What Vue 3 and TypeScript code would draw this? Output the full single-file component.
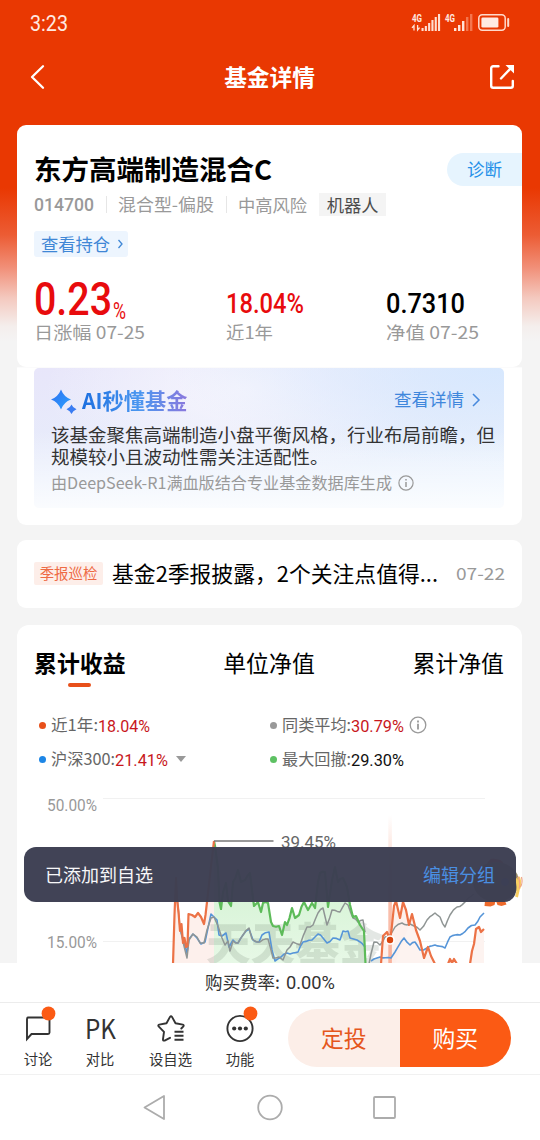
<script setup lang="ts">
import { h } from 'vue'

interface FitProps {
  t: string
  w: number
  s: number
}

// One line of text set to an exact advance width; the box is one em high.
const Fit = (p: FitProps) =>
  h('svg', { class: 'fit', width: p.w, height: p.s }, [
    h(
      'text',
      { x: 0, y: p.s * 0.87, 'font-size': p.s, textLength: p.w, lengthAdjust: 'spacingAndGlyphs', fill: 'currentColor' },
      p.t,
    ),
  ])
Fit.props = ['t', 'w', 's']

type Pt = [number, number]

// Adds small alternating steps between the key points of a price line.
function jag(points: Pt[], amp: number): string {
  const out: string[] = []
  points.forEach(([x, y], i) => {
    if (i > 0) {
      const [px, py] = points[i - 1]
      const n = Math.floor((x - px) / 2.4)
      for (let k = 1; k < n; k++) {
        const f = k / n
        const d = Math.sin((px + k * 2.4) * 12.9) * amp
        out.push(`${(px + (x - px) * f).toFixed(1)},${(py + (y - py) * f + d).toFixed(1)}`)
      }
    }
    out.push(`${x},${y}`)
  })
  return out.join(' ')
}

const fundA: Pt[] = [[173, 964], [174.5, 915], [176, 878], [177, 899], [178.5, 912], [180, 931], [181.5, 924], [183, 943], [184.5, 938], [186, 947], [187.5, 946], [188.5, 914], [192, 915], [195, 917], [198, 913], [201, 917], [204, 924], [205.5, 915], [207, 902], [209, 884], [211, 866], [214, 841]]
const fundB: Pt[] = [[381, 964], [383, 936], [387, 932], [390, 940], [391.5, 930], [394, 906], [396, 901], [400, 918], [403, 902], [406, 910], [409, 925], [412, 914], [416, 930], [420, 941], [424, 958], [428, 947], [431, 956], [435, 964]]
const fundC: Pt[] = [[470, 964], [472, 951], [474, 944], [476, 929], [479, 927], [481, 932], [484, 929]]
const fall: Pt[] = [[214, 841], [215, 846], [218, 868], [219.5, 902], [221, 909], [223, 892], [226, 883], [228, 901], [231, 906], [233, 882], [238, 870], [241, 882], [245, 880], [250, 873], [252, 890], [254, 906], [258, 902], [261, 912], [263, 903], [268, 903], [271, 922], [273, 926], [279, 926], [282, 935], [285, 922], [287, 925], [292, 908], [295, 918], [299, 915], [304, 902], [308, 910], [312, 903], [315, 908], [318, 882], [320, 873], [325, 872], [328, 907], [332, 880], [335, 867], [338, 882], [343, 878], [347, 887], [350, 905], [353, 917], [356, 916], [360, 925], [364, 931], [365.5, 964]]
const peersA: Pt[] = [[176, 880], [177, 895], [180, 928], [184, 946], [187, 958], [189, 940], [193, 934], [197, 937], [200, 943], [204, 943], [207, 930], [211, 918], [214, 917], [218, 926], [222, 938], [225, 945], [228, 941], [230, 951], [233, 941], [238, 943], [243, 935], [249, 928], [252, 939], [260, 942], [268, 939], [271, 950], [273, 958], [279, 957], [283, 960], [287, 950], [293, 942], [300, 945], [307, 927], [313, 925], [318, 913], [323, 908], [327, 925], [332, 910], [340, 912], [345, 903], [348, 905], [353, 918], [358, 922], [363, 920], [365, 932]]
const peersB: Pt[] = [[369, 964], [371, 954], [374, 942], [380, 945], [385, 937], [391, 934], [395, 927], [402, 923], [410, 924], [414, 926], [420, 930], [427, 920], [435, 913], [440, 917], [445, 927], [450, 915], [457, 907], [465, 902], [474, 894]]
const indexA: Pt[] = [[181, 932], [184, 942], [187, 953], [189, 939], [193, 934], [197, 938], [201, 944], [205, 942], [208, 928], [211, 914], [214, 917], [217, 920], [219, 935], [222, 936], [226, 933], [229, 947], [233, 940], [238, 943], [243, 935], [249, 929], [253, 940], [259, 942], [262, 935], [269, 932], [272, 950], [275, 961], [281, 957], [287, 953], [293, 953], [298, 952], [303, 942], [312, 940], [318, 934], [323, 938], [327, 943], [333, 938], [340, 940], [343, 931], [348, 931], [350, 938], [357, 940], [365, 947]]
const indexB: Pt[] = [[371, 961], [380, 957], [391, 958], [395, 952], [404, 938], [410, 945], [415, 942], [420, 950], [427, 948], [435, 945], [445, 948], [450, 937], [460, 935], [468, 928], [475, 925], [480, 917], [484, 913]]

const bars1 = [3, 5, 8, 11, 14, 17]
const bars2 = [3, 6, 10, 14, 17]
</script>

<template>
  <div class="page">
    <header class="status">
      <Fit class="clock" t="3:23" :w="38" :s="21.5" />
      <svg class="signals" width="100" height="22" viewBox="410 11 100 22">
        <g class="net">
          <text x="412" y="22" textLength="10" lengthAdjust="spacingAndGlyphs">4G</text>
          <text x="445" y="22" textLength="10" lengthAdjust="spacingAndGlyphs">4G</text>
        </g>
        <path d="M414 30.500v-5l-2 2.400M417.600 25v5l2-2.400" fill="none" stroke="#ffe3d8" stroke-width="1.3" />
        <rect v-for="(b, i) in bars1" :key="'a' + i" :x="421.5 + i * 3.3" :y="31 - b" width="2.1" :height="b" fill="#ffdfd2" />
        <rect v-for="(b, i) in bars2" :key="'b' + i" :x="454 + i * 4" :y="31 - b" width="2.4" :height="b" :fill="i > 2 ? '#f4764e' : '#ffe3d8'" />
        <rect x="478.8" y="14.8" width="26.4" height="15.4" rx="3.4" fill="none" stroke="#ffdacb" stroke-width="1.5" />
        <rect x="481.4" y="17.4" width="17" height="10.2" rx="1.4" fill="#ffeae2" />
        <rect x="507.2" y="18" width="2" height="9" rx="1" fill="#ffdacb" />
      </svg>
    </header>
    <nav class="top">
      <svg width="18" height="26" viewBox="0 0 18 26"><path d="M15 2.200L4 13l11 10.800" fill="none" stroke="#fff" stroke-width="2.3" stroke-linecap="round" stroke-linejoin="round" /></svg>
      <h1>基金详情</h1>
      <svg width="26" height="26" viewBox="0 0 26 26"><g fill="none" stroke="#fff" stroke-width="2.4"><path d="M9.5 2.2H4.2a2 2 0 0 0-2 2v17.600a2 2 0 0 0 2 2h17.600a2 2 0 0 0 2-2V17" stroke-linecap="round" /><path d="M12 14.500L22.500 3.500" stroke-linecap="round" /></g><path d="M16.500 1h8.500v8.500z" fill="#fff" /></svg>
    </nav>

    <section class="card fund">
      <div class="title">
        <Fit class="b" t="东方高端制造混合C" :w="238" :s="27.2" />
        <span class="diag">诊断</span>
      </div>
      <div class="meta">
        <Fit class="num m" t="014700" :w="60" :s="18.500" />
        <i></i>
        <Fit t="混合型-偏股" :w="96" :s="17.300" />
        <i></i>
        <span>中高风险</span>
        <span class="tag">机器人</span>
      </div>
      <div class="hold">
        <span>查看持仓</span>
        <svg width="8" height="12" viewBox="0 0 8 12"><path d="M2.500 2L6 6 2.500 10" fill="none" stroke="#3f87d6" stroke-width="1.3" /></svg>
      </div>
      <div class="stats">
        <div>
          <p class="up big"><Fit class="num sb" t="0.23" :w="78" :s="46" /><Fit class="num pct" t="%" :w="13" :s="24" /></p>
          <p class="lab"><Fit t="日涨幅 07-25" :w="111" :s="17.5" /></p>
        </div>
        <div>
          <p class="up"><Fit class="num sb" t="18.04%" :w="78" :s="28.5" /></p>
          <p class="lab"><Fit t="近1年" :w="47" :s="17.5" /></p>
        </div>
        <div>
          <p><Fit class="num sb" t="0.7310" :w="79" :s="28.5" /></p>
          <p class="lab"><Fit t="净值 07-25" :w="93" :s="17.5" /></p>
        </div>
      </div>
    </section>

    <section class="ai-wrap">
      <div class="ai">
        <div class="ai-head">
          <svg width="26" height="26" viewBox="0 0 26 26"><defs><linearGradient id="sp" x1="0" y1="0" x2="1" y2="1"><stop offset="0" stop-color="#2f6ff0" /><stop offset="1" stop-color="#2aa2ff" /></linearGradient></defs><path d="M10 0.500Q12.800 7.900 20 10.500Q12.800 13.100 10 20.500Q7.200 13.100 0 10.500Q7.200 7.900 10 0.500Z" fill="url(#sp)" /><path d="M20.500 15.500Q21.800 18.900 25.500 20.200Q21.800 21.600 20.500 25Q19.200 21.600 15.500 20.200Q19.200 18.900 20.500 15.500Z" fill="#3a7cf2" /></svg>
          <h2>AI秒懂基金</h2>
          <span>查看详情</span>
          <svg width="12" height="16" viewBox="0 0 12 16"><path d="M3 2l6 6-6 6" fill="none" stroke="#4689dd" stroke-width="1.500" /></svg>
        </div>
        <p class="ai-text">
          <Fit t="该基金聚焦高端制造小盘平衡风格，行业布局前瞻，但" :w="444" :s="18.5" />
          <Fit t="规模较小且波动性需关注适配性。" :w="277.500" :s="18.5" />
        </p>
        <p class="ai-src">
          <Fit t="由DeepSeek-R1满血版结合专业基金数据库生成" :w="341" :s="16" />
          <svg width="16" height="16" viewBox="0 0 16 16"><circle cx="8" cy="8" r="7.100" fill="none" stroke="#999" stroke-width="1.200" /><path d="M8 4v1.600M8 7v5" stroke="#999" stroke-width="1.500" /></svg>
        </p>
      </div>
    </section>

    <section class="card news">
      <span class="badge">季报巡检</span>
      <Fit class="head" t="基金2季报披露，2个关注点值得..." :w="326" :s="21.500" />
      <Fit class="date" t="07-22" :w="49" :s="17" />
    </section>

    <section class="card perf">
      <div class="tabs">
        <span class="on">累计收益</span>
        <span>单位净值</span>
        <span>累计净值</span>
      </div>
      <div class="legend">
        <div class="item"><b class="dot d1"></b><Fit t="近1年:" :w="47" :s="16" /><Fit class="num red" t="18.04%" :w="52" :s="16.800" /></div>
        <div class="item"><b class="dot d2"></b><Fit t="同类平均:" :w="69" :s="16" /><Fit class="num red" t="30.79%" :w="53" :s="16.800" />
          <svg class="info" width="18" height="18" viewBox="0 0 18 18"><circle cx="9" cy="9" r="7.800" fill="none" stroke="#999" stroke-width="1.300" /><path d="M9 4.600v1.800M9 7.800v5.600" stroke="#999" stroke-width="1.800" /></svg>
        </div>
        <div class="item"><b class="dot d3"></b><Fit t="沪深300:" :w="64" :s="16" /><Fit class="num red" t="21.41%" :w="53" :s="16.800" /><b class="caret"></b></div>
        <div class="item"><b class="dot d4"></b><Fit t="最大回撤:" :w="69" :s="16" /><Fit class="num blk" t="29.30%" :w="53" :s="16.800" /></div>
      </div>
      <svg class="chart" width="505" height="173" viewBox="17 790 505 173">
        <defs>
          <linearGradient id="gf" x1="0" y1="0" x2="0" y2="1"><stop offset="0" stop-color="#c3eec3" /><stop offset="1" stop-color="#e3f7e2" /></linearGradient>
          <linearGradient id="beam" x1="0" y1="0" x2="0" y2="1"><stop offset="0" stop-color="#f58a68" stop-opacity="0" /><stop offset="0.600" stop-color="#f58a68" stop-opacity="0.550" /><stop offset="1" stop-color="#f58a68" stop-opacity="0.600" /></linearGradient>
        </defs>
        <path d="M103 798.500H485M103 941.500H485" stroke="#f1f1f1" stroke-width="1" />
        <g class="axis">
          <text x="47" y="810.500" textLength="50" lengthAdjust="spacingAndGlyphs">50.00%</text>
          <text x="47" y="947.500" textLength="50" lengthAdjust="spacingAndGlyphs">15.00%</text>
        </g>
        <polygon :points="jag(fundA, 0) + ' 214,964'" fill="#fdf0ec" />
        <polygon :points="jag(fundB, 0)" fill="#fdf0ec" />
        <polygon points="409,925 420,941 424,958 428,947 435,964 470,964 472,951 476,929 484,929 484,964 395,964" fill="#fdf3f0" />
        <polygon :points="'214,964 ' + jag(fall, 0)" fill="url(#gf)" opacity="0.850" />
        <text class="mark" x="206" y="961" textLength="178" lengthAdjust="spacingAndGlyphs">天天基金</text>
        <rect x="388.300" y="815" width="3.600" height="150" fill="url(#beam)" />
        <g fill="none" stroke-linejoin="round">
          <g stroke="#5695d8" stroke-width="1.600"><polyline :points="jag(indexA, 1)" /><polyline :points="jag(indexB, 1)" /></g>
          <g stroke="#8f9594" stroke-width="1.500"><polyline :points="jag(peersA, 1.100)" /><polyline :points="jag(peersB, 1.300)" /></g>
          <polyline :points="jag(fall, 1.800)" stroke="#5dbb59" stroke-width="2.200" />
          <g stroke="#ec7246" stroke-width="2.200"><polyline :points="jag(fundA, 1)" /><polyline :points="jag(fundB, 1.200)" /><polyline :points="jag(fundC, 1)" /><polyline points="448,964 450,959 452,963 454,959 457,964" /></g>
        </g>
        <path d="M214 841H273.500" stroke="#777" stroke-width="1.500" />
        <text class="peak" x="281" y="848" textLength="55" lengthAdjust="spacingAndGlyphs">39.45%</text>
        <circle cx="390" cy="940" r="4.800" fill="#fff" /><circle cx="390" cy="940" r="3.200" fill="#d9460f" />
      </svg>
    </section>

    <svg class="mascot" width="60" height="60" viewBox="468 850 60 60">
      <path d="M486 868q2-12 10-9 9 0 8 10z" fill="#e8492c" />
      <ellipse cx="496" cy="882" rx="23" ry="20" fill="#8f8466" />
      <circle cx="483" cy="882" r="4" fill="#3b66b8" /><circle cx="505" cy="882" r="4" fill="#3b66b8" />
      <path d="M485 901h10.500l-1 4-4 1.500-6-0.500zM496 901h9l1.500 3.500-5 1.500-4-1z" fill="#ee6a2b" />
      <path d="M515.500 879q5 6 1 18M518.500 877q3 8-1 14" stroke="#f9cf62" stroke-width="3" fill="none" />
      <path d="M518 876.500q3 7 1 12M521.500 877q1.500 6-1 10" stroke="#f0a184" stroke-width="1.100" fill="none" />
    </svg>

    <div class="toast"><span>已添加到自选</span><a>编辑分组</a></div>

    <footer class="bottom">
      <div class="fee"><Fit t="购买费率:" :w="75" :s="17.500" /><Fit class="num" t="0.00%" :w="49" :s="18.500" /></div>
      <div class="actions">
        <div class="tools">
          <div class="tool">
            <svg width="36" height="40" viewBox="20 1004 36 40"><path d="M27.500 1017.500h20.500a1.500 1.500 0 0 1 1.500 1.500v13.500a1.500 1.500 0 0 1-1.500 1.500H31.500l-4.500 5v-20a1.500 1.500 0 0 1 1.500-1.500z" fill="none" stroke="#333" stroke-width="1.900" /><circle cx="48.500" cy="1013.500" r="6.900" fill="#fb5a14" /></svg>
            <span>讨论</span>
          </div>
          <div class="tool">
            <Fit class="pk" t="PK" :w="31" :s="26.500" />
            <span>对比</span>
          </div>
          <div class="tool">
            <svg width="36" height="40" viewBox="152 1004 36 40"><g fill="none" stroke="#333" stroke-width="1.900" stroke-linejoin="round" stroke-linecap="round"><path d="M169 1037.800L163.600 1040.600Q161.800 1041 162 1039.200L163 1031.800L157.600 1026.300Q156.800 1025 158.200 1024.600L165.500 1023.300L169 1016.900Q170 1015.300 171 1016.900L174.500 1023.300L181.800 1024.600Q183.200 1025 182.400 1026.300L180.300 1028.500" /><path d="M173.500 1031.800h9M173.500 1035.800h9M173.500 1039.800h9" stroke-linecap="butt" stroke-width="2" /></g></svg>
            <span>设自选</span>
          </div>
          <div class="tool">
            <svg width="36" height="40" viewBox="222 1004 36 40"><circle cx="240" cy="1028.500" r="12.600" fill="none" stroke="#333" stroke-width="1.900" /><g fill="#333"><circle cx="234.200" cy="1028.500" r="2.100" /><circle cx="240" cy="1028.500" r="2.100" /><circle cx="245.800" cy="1028.500" r="2.100" /></g><circle cx="250.500" cy="1013.500" r="6.900" fill="#fb5a14" /></svg>
            <span>功能</span>
          </div>
        </div>
        <div class="btns"><span class="plan">定投</span><span class="buy">购买</span></div>
      </div>
      <div class="sys">
        <svg width="260" height="30" viewBox="140 1092 260 30"><g fill="none" stroke="#acacac" stroke-width="1.800" stroke-linejoin="round"><path d="M164 1096v23L144.500 1107.500z" /><circle cx="270" cy="1107.500" r="11.800" /><rect x="374" y="1097" width="21" height="21" rx="1" /></g></svg>
      </div>
    </footer>
  </div>
</template>

<style>
body {
  margin: 0;
  background: #fff;
}
</style>

<style scoped>
.page {
  position: relative;
  width: 540px;
  height: 1140px;
  overflow: hidden;
  box-sizing: border-box;
  display: flex;
  flex-direction: column;
  background: linear-gradient(#e93802 0, #e93802 188px, #ec5c34 235px, #f19079 268px, #f4c9bf 298px, #f4eeec 326px, #f4f4f4 342px);
  font-family: "Noto Sans CJK SC", "Noto Sans", sans-serif;
  color: #000;
}
p, h1, h2 { margin: 0; }
svg { display: block; flex: none; }
.fit { overflow: visible; }
.num { font-family: Roboto, "Noto Sans CJK SC", sans-serif; }
.b { font-weight: 700; }
.m { font-weight: 500; }
.sb { font-weight: 500; }
.status {
  height: 47px;
  flex: none;
  display: flex;
  justify-content: space-between;
  align-items: center;
  padding: 0 30px;
  color: #ffe9e1;
}
.clock { font-family: Roboto, sans-serif; margin-bottom: 1px; }
.signals { margin-bottom: 3px; overflow: visible; }
.net { fill: #ffe9e1; font: 700 10px Roboto, sans-serif; }
.top {
  height: 60px;
  flex: none;
  display: flex;
  align-items: center;
  justify-content: space-between;
  padding: 0 25px 0 28px;
}
.top h1 { font-size: 22.700px; line-height: 30px; font-weight: 700; color: #fff; margin-left: 4px; }
.card { background: #fff; border-radius: 9px; margin: 0 18px 0 17px; flex: none; box-sizing: border-box; }
.fund { margin-top: 17.500px; height: 242.500px; padding-top: 28px; }
.title { height: 34px; display: flex; align-items: center; justify-content: space-between; padding-left: 17px; }
.diag { width: 75px; height: 33px; line-height: 32px; border-radius: 17px 0 0 17px; background: #e6f4fe; color: #2590e8; font-size: 17.500px; text-align: center; }
.meta { margin-top: 6px; height: 24px; display: flex; align-items: center; padding-left: 17px; color: #999; font-size: 17.300px; line-height: 23px; }
.meta i { width: 1px; height: 17px; background: #e6e6e6; margin: 0 11.500px; }
.meta .tag { background: #f4f4f4; color: #4c4c4c; padding: 0 7.500px; margin-left: 12px; }
.hold { margin: 14px 0 0 17px; width: 94px; height: 26px; box-sizing: border-box; padding: 0 4px 0 7px; border-radius: 3px; background: #edf5fe; color: #3f87d6; font-size: 17.300px; line-height: 25px; display: flex; align-items: center; justify-content: space-between; }
.stats { display: grid; grid-template-columns: 192px 160px 1fr; padding-left: 17px; margin-top: 18px; }
.stats p { display: flex; align-items: flex-end; height: 46px; box-sizing: border-box; }
.stats > div > p:first-child { padding-bottom: 4px; }
.stats .big { padding-bottom: 0 !important; }
.stats .pct { margin: 0 0 -1px 1px; }
.stats .lab { height: 21px; color: #999; align-items: flex-end; }
.up { color: #e80b0d; }
.ai-wrap { height: 158px; flex: none; box-sizing: border-box; margin: 0 18px 0 17px; padding: 1px 17px 0; background: linear-gradient(#f7f7f8, #fff 1px); border-radius: 0 0 9px 9px; }
.ai {
  height: 140px;
  width: 470px;
  box-sizing: border-box;
  padding: 18px 17px 0;
  border-radius: 5px;
  background:
    linear-gradient(rgba(255, 255, 255, 0) 45%, rgba(255, 255, 255, 0.800) 100%),
    radial-gradient(ellipse at 100% 0, #d7e8fe 0, rgba(215, 232, 254, 0) 50%),
    radial-gradient(ellipse at 45% 15%, #f6f5fd 0, rgba(246, 245, 253, 0) 55%),
    linear-gradient(170deg, #e8e6fa 0, #e7edfb 50%, #e8f3fe 100%);
}
.ai-head { height: 28px; display: flex; align-items: center; }
.ai-head h2 { margin-left: 5px; font-size: 21.200px; line-height: 28px; font-weight: 700; background: linear-gradient(90deg, #1c6fe0, #4b97f0 55%, #8a78dd); background-clip: text; -webkit-background-clip: text; color: transparent; }
.ai-head span { margin-left: auto; font-size: 17.500px; line-height: 24px; color: #3f87dc; margin-right: 6px; margin-top: -2px; }
.ai-head > svg:last-child { margin-right: 5px; }
.ai-head > svg:first-child { margin-top: 4px; }
.ai-text { margin-top: 11.500px; display: grid; gap: 3.500px; color: #333; }
.ai-src { margin-top: 8.500px; display: flex; align-items: center; gap: 6px; color: #999; }
.news { height: 68.500px; margin-top: 14.500px; display: flex; align-items: center; padding: 0 17px; }
.badge { width: 69px; height: 23px; line-height: 22px; background: #fdeee9; color: #ee6a44; font-size: 14.400px; text-align: center; border-radius: 2px; }
.head { margin-left: 9px; }
.date { margin-left: auto; color: #999; }
.perf { margin-top: 17px; height: 520px; border-radius: 12px; }
.tabs { display: flex; justify-content: space-between; padding: 21px 18px 0 17px; font-size: 22.900px; line-height: 32px; }
.tabs .on { font-weight: 700; display: flex; flex-direction: column; align-items: center; }
.tabs .on::after { content: ''; width: 23px; height: 4px; border-radius: 2px; background: #e8501a; margin-top: 5px; }
.legend { display: grid; grid-template-columns: 231px 1fr; grid-auto-rows: 34px; padding: 21px 0 0 21px; margin-bottom: 0; }
.item { display: flex; align-items: center; color: #666; height: 34px; gap: 0; }
.item .num { margin-top: 1px; }
.dot { width: 7px; height: 7px; border-radius: 50%; margin: 0 5.500px 0 0.500px; flex: none; }
.d1 { background: #e8501a; }
.d2 { background: #999; }
.d3 { background: #1d86e6; }
.d4 { background: #5dc163; }
.red { color: #c8171c; }
.blk { color: #111; }
.info { margin-left: 5px; }
.caret { border: 5px solid transparent; border-top: 6px solid #999; border-bottom: 0; margin-left: 8px; }
.chart { margin-top: 14px; overflow: visible; }
.axis { font-family: Roboto, sans-serif; font-size: 16px; fill: #999; }
.mark { font-weight: 900; font-size: 45px; fill: #5a6e5c; opacity: 0.16; }
.peak { font-family: Roboto, sans-serif; font-size: 17px; fill: #666; }
.mascot { position: absolute; left: 468px; top: 850px; }
.toast { position: absolute; left: 24px; top: 847px; width: 492px; height: 55px; box-sizing: border-box; padding: 0 21px 2px; border-radius: 12px; background: rgba(60, 62, 82, 0.975); color: #f7f7f9; font-size: 18px; display: flex; align-items: center; justify-content: space-between; }
.toast a { color: #4a8fe2; }
.bottom { position: absolute; left: 0; bottom: 0; width: 540px; height: 177px; background: #fff; }
.fee { height: 40px; box-sizing: border-box; border-bottom: 1px solid #ececec; display: flex; gap: 6px; justify-content: center; align-items: center; color: #333; }
.actions { height: 72px; box-sizing: border-box; border-bottom: 1px solid #f1f1f1; display: flex; }
.tools { display: grid; grid-template-columns: 76px 48px 93px 46px; }
.tool { display: flex; flex-direction: column; align-items: center; padding-top: 1px; font-size: 14.300px; line-height: 20px; color: #333; }
.tool span { margin-top: 5px; }
.pk { margin: 12px 0 1.500px; }
.btns { margin: 6px 0 0 25px; width: 223px; height: 58px; border-radius: 29px; overflow: hidden; display: grid; grid-template-columns: 1fr 1fr; text-align: center; font-size: 22.800px; line-height: 57px; }
.plan { background: #fceee8; color: #e5561c; }
.buy { background: #fb5a14; color: #fff; }
.sys { display: flex; justify-content: center; padding-top: 17px; }
</style>
